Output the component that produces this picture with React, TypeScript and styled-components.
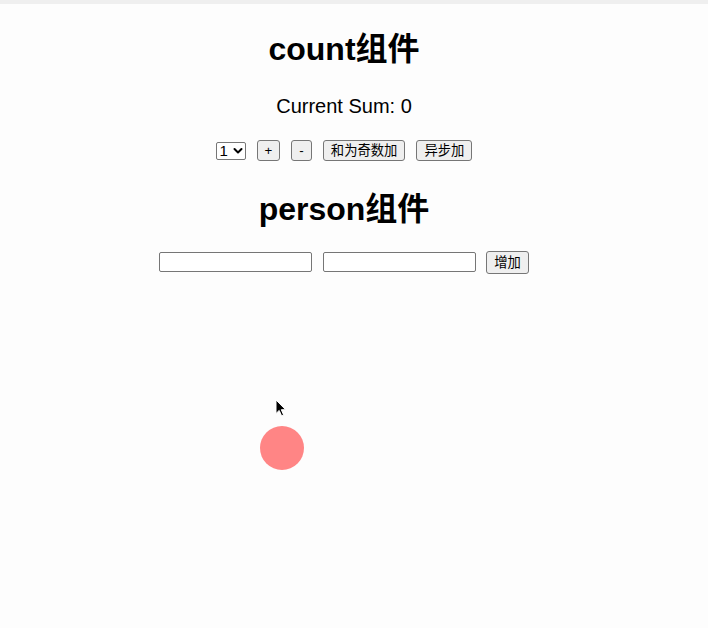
import { FC, useState } from "react";
import styled, { createGlobalStyle } from "styled-components";

const GlobalStyle = createGlobalStyle`
  html, body {
    margin: 0;
    padding: 0;
    background: #fdfdfd;
  }
  body {
    font-family: "Liberation Sans", "Noto Sans CJK SC", Arial, sans-serif;
    color: #000;
  }
`;

const App: FC = () => {
  const [sum, setSum] = useState(0);
  const [step, setStep] = useState(1);

  const add = () => setSum(sum + step);
  const minus = () => setSum(sum - step);
  const addIfOdd = () => sum % 2 !== 0 && setSum(sum + step);
  const addAsync = () => setTimeout(() => setSum((s) => s + step), 500);

  return (
    <Root>
      <GlobalStyle />
      <TopStrip />
      <Page>
        <Title top={27}>count组件</Title>
        <Sum>Current Sum: {sum}</Sum>
        <Controls>
          <SelectWrap>
            <Select
              value={step}
              onChange={(e) => setStep(Number(e.target.value))}
            >
              <option value={1}>1</option>
              <option value={2}>2</option>
              <option value={3}>3</option>
            </Select>
            <Chevron viewBox="0 0 10 10">
              <path
                d="M1.5 3 L5 6.5 L8.5 3"
                fill="none"
                stroke="#000"
                strokeWidth="2"
                strokeLinecap="round"
                strokeLinejoin="round"
              />
            </Chevron>
          </SelectWrap>
          <Button onClick={add}>+</Button>
          <Button onClick={minus}>-</Button>
          <Button onClick={addIfOdd}>和为奇数加</Button>
          <Button onClick={addAsync}>异步加</Button>
        </Controls>
        <Title top={30}>person组件</Title>
        <FormRow>
          <Input type="text" />
          <Input type="text" />
          <Button tall>增加</Button>
        </FormRow>
        <Stage>
          <Cursor viewBox="0 0 12 18">
            <path
              d="M1 1 L1 14.5 L4.2 11.4 L6.6 16.8 L8.6 15.9 L6.3 10.7 L10.6 10.7 Z"
              fill="#000"
              stroke="#fff"
              strokeWidth="1"
              strokeLinejoin="round"
            />
          </Cursor>
          <Ball />
        </Stage>
      </Page>
    </Root>
  );
};

export default App;

const Root = styled.div`
  width: 708px;
  min-height: 628px;
  background: #fdfdfd;
`;

const TopStrip = styled.div`
  height: 4px;
  background: #efefef;
`;

const Page = styled.div`
  width: 688px;
  display: flex;
  flex-direction: column;
  align-items: center;
`;

const Title = styled.h1<{ top: number }>`
  margin: ${(p) => p.top}px 0 0;
  font-size: 32px;
  line-height: 36px;
  font-weight: bold;
`;

const Sum = styled.h3`
  margin: 28px 0 0;
  font-size: 20px;
  line-height: 23px;
  font-weight: normal;
`;

const Controls = styled.div`
  margin-top: 22px;
  height: 21px;
  display: flex;
  align-items: center;
  gap: 11px;
`;

const SelectWrap = styled.div`
  position: relative;
  width: 30px;
  height: 18px;
`;

const Select = styled.select`
  appearance: none;
  width: 30px;
  height: 18px;
  margin: 0;
  padding: 0 0 0 3px;
  border: 1px solid #767676;
  border-radius: 2px;
  background: #fff;
  font-family: inherit;
  font-size: 15px;
  line-height: 16px;
  color: #000;
`;

const Chevron = styled.svg`
  position: absolute;
  right: 3px;
  top: 4px;
  width: 10px;
  height: 10px;
  pointer-events: none;
`;

const Button = styled.button<{ tall?: boolean }>`
  height: ${(p) => (p.tall ? 23 : 21)}px;
  margin: 0;
  padding: 0 7px;
  border: 1px solid #767676;
  border-radius: 3px;
  background: #efefef;
  font-family: inherit;
  font-size: 13.33px;
  line-height: 15px;
  color: #000;
  cursor: default;
`;

const FormRow = styled.div`
  margin-top: 23px;
  height: 24px;
  display: flex;
  align-items: center;
  gap: 11px;

  & > button {
    margin-left: -1px;
  }
`;

const Input = styled.input`
  box-sizing: border-box;
  width: 153px;
  height: 20px;
  margin: 0;
  padding: 1px 2px;
  border: 1px solid #767676;
  border-radius: 2px;
  background: #fff;
  font-family: inherit;
  font-size: 13.33px;
`;

const Stage = styled.div`
  position: relative;
  align-self: stretch;
  height: 354px;
`;

const Cursor = styled.svg`
  position: absolute;
  left: 275px;
  top: 125px;
  width: 12px;
  height: 18px;
`;

const Ball = styled.div`
  position: absolute;
  left: 260px;
  top: 152px;
  width: 44px;
  height: 44px;
  border-radius: 50%;
  background: #ff8585;
`;
